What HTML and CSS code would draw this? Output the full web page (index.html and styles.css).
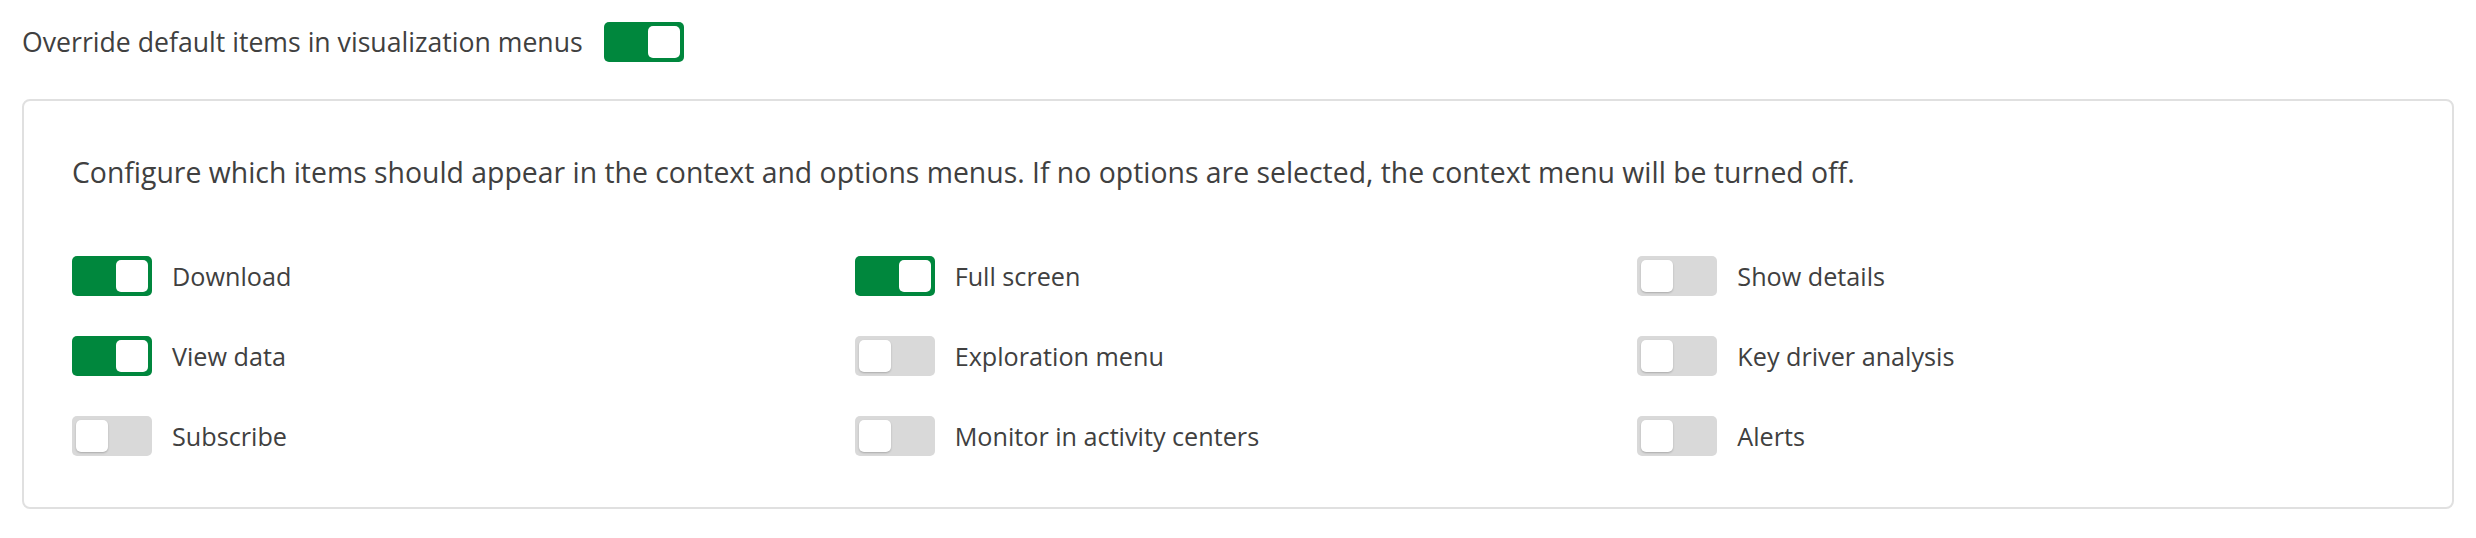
FILE: index.html
```html
<!DOCTYPE html>
<html lang="en">
<head>
<meta charset="utf-8">
<title>Menu settings</title>
<link rel="stylesheet" href="styles.css">
</head>
<body>
  <div class="header">
    <span class="header-label">Override default items in visualization menus</span>
    <span class="toggle on"><span class="knob"></span></span>
  </div>
  <div class="card">
    <p class="desc">Configure which items should appear in the context and options menus. If no options are selected, the context menu will be turned off.</p>
    <div class="grid">
      <div class="item"><span class="toggle on"><span class="knob"></span></span><span class="label">Download</span></div>
      <div class="item"><span class="toggle on"><span class="knob"></span></span><span class="label">Full screen</span></div>
      <div class="item"><span class="toggle"><span class="knob"></span></span><span class="label">Show details</span></div>
      <div class="item"><span class="toggle on"><span class="knob"></span></span><span class="label">View data</span></div>
      <div class="item"><span class="toggle"><span class="knob"></span></span><span class="label">Exploration menu</span></div>
      <div class="item"><span class="toggle"><span class="knob"></span></span><span class="label">Key driver analysis</span></div>
      <div class="item"><span class="toggle"><span class="knob"></span></span><span class="label">Subscribe</span></div>
      <div class="item"><span class="toggle"><span class="knob"></span></span><span class="label">Monitor in activity centers</span></div>
      <div class="item"><span class="toggle"><span class="knob"></span></span><span class="label">Alerts</span></div>
    </div>
  </div>
</body>
</html>
```
FILE: styles.css
```css
html, body {
  margin: 0;
  background: #ffffff;
}
body {
  padding: 22px;
  font-family: "Open Sans", "Noto Sans", sans-serif;
  font-size: 25.2px;
  line-height: 40px;
  color: #404040;
}
.header {
  display: flex;
  align-items: center;
  gap: 21px;
  height: 40px;
}
.header-label {
  font-size: 26.65px;
}
.toggle {
  display: flex;
  align-items: center;
  justify-content: flex-start;
  box-sizing: border-box;
  width: 80px;
  height: 40px;
  padding: 4px;
  border-radius: 5px;
  background: #d9d9d9;
  flex: none;
}
.toggle.on {
  background: #00873d;
  justify-content: flex-end;
}
.knob {
  display: block;
  width: 32px;
  height: 32px;
  border-radius: 5px;
  background: #ffffff;
  box-shadow: 0 1px 2px rgba(0, 0, 0, 0.22);
}
.toggle.on .knob {
  box-shadow: none;
}
.card {
  margin-top: 37px;
  border: 2px solid #e0e0e0;
  border-radius: 8px;
  padding: 51px 32px 51px 48px;
}
.desc {
  margin: 0 0 64px 0;
  font-size: 28.38px;
}
.grid {
  display: grid;
  grid-template-columns: repeat(3, 1fr);
  row-gap: 40px;
}
.item {
  display: flex;
  align-items: center;
  gap: 20px;
  height: 40px;
}
```
